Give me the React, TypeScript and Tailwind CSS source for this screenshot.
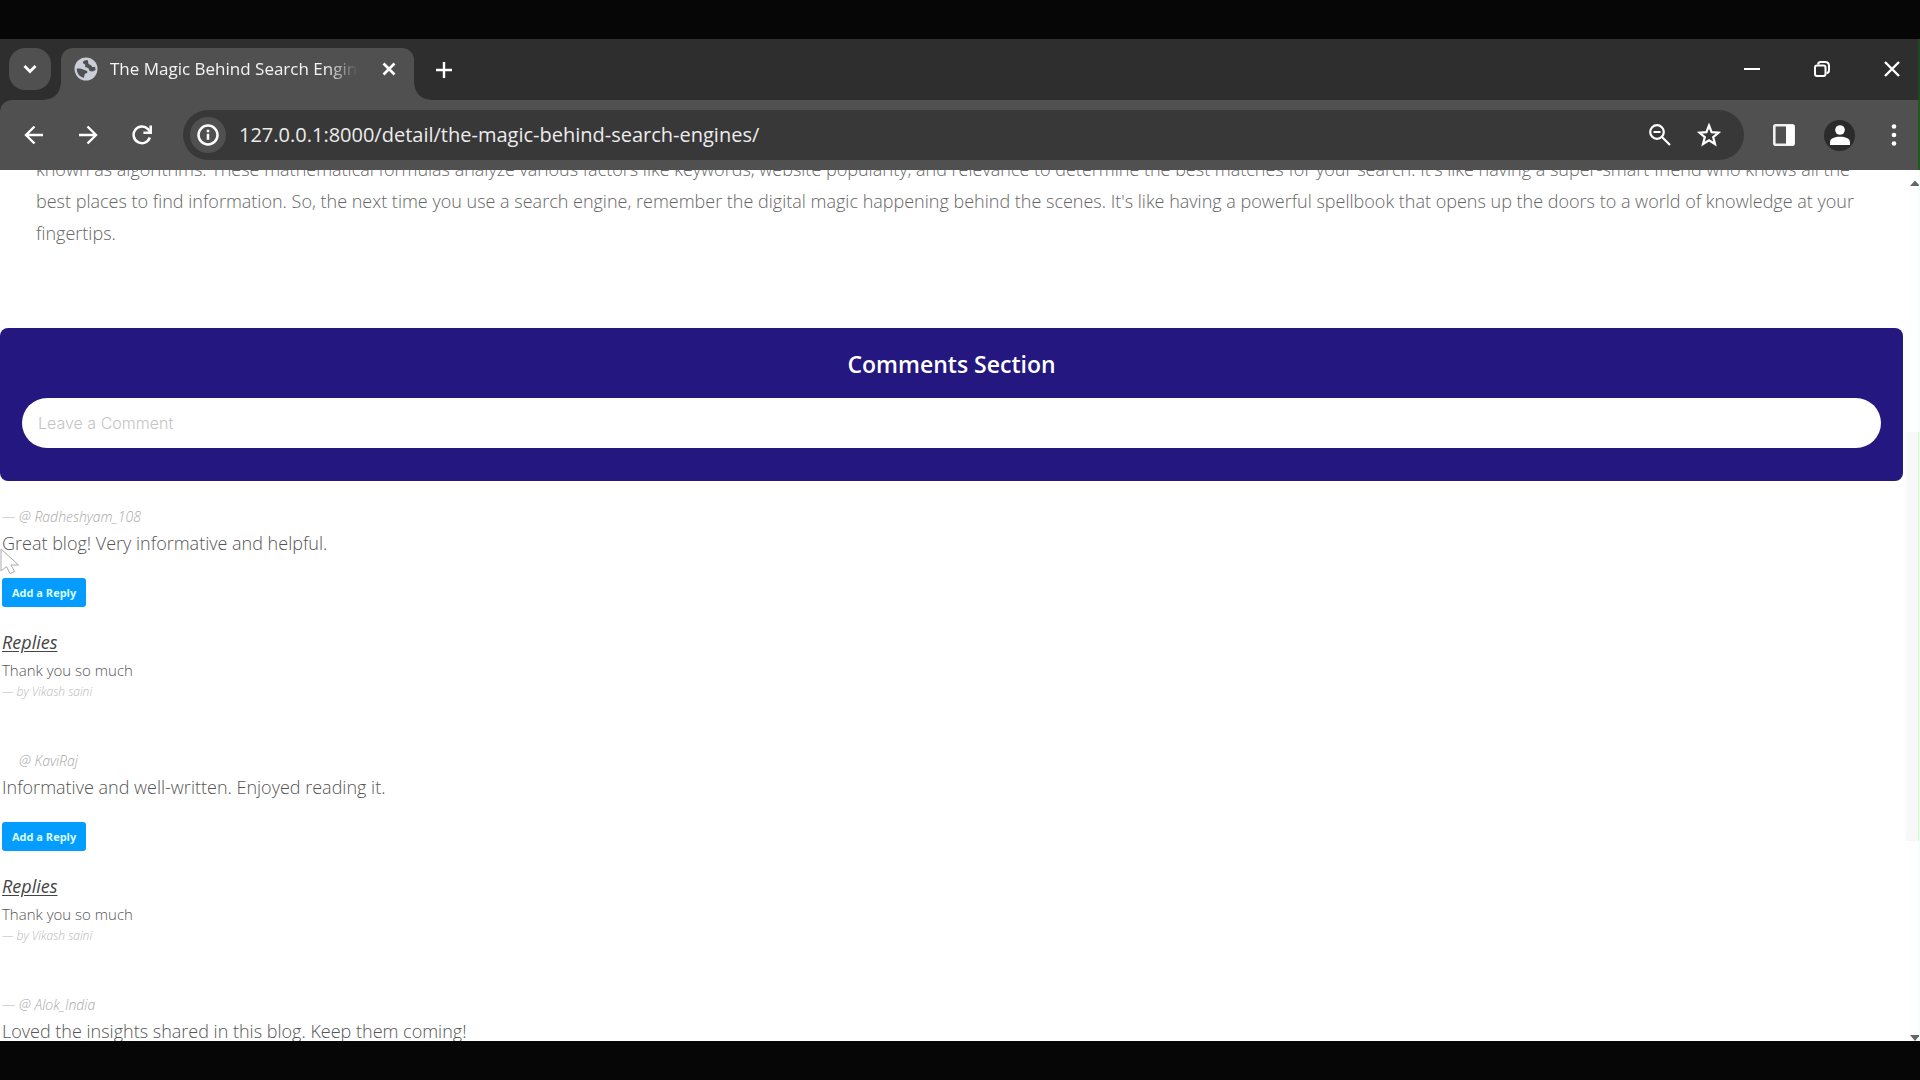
import React from "react";

type Comment = {
  id: string;
  author: string;
  text: string;
  dash: string;
  replies: { text: string; by: string }[];
};

const comments: Comment[] = [
  {
    id: "c1",
    author: "@ Radheshyam_108",
    text: "Great blog! Very informative and helpful.",
    dash: "text-[#b4b4b4]",
    replies: [{ text: "Thank you so much", by: "by Vikash saini" }],
  },
  {
    id: "c2",
    author: "@ KaviRaj",
    text: "Informative and well-written. Enjoyed reading it.",
    dash: "text-transparent",
    replies: [{ text: "Thank you so much", by: "by Vikash saini" }],
  },
  {
    id: "c3",
    author: "@ Alok_India",
    text: "Loved the insights shared in this blog. Keep them coming!",
    dash: "text-[#b4b4b4]",
    replies: [],
  },
];

function IconButton({
  label,
  className,
  children,
}: {
  label: string;
  className: string;
  children: React.ReactNode;
}) {
  return (
    <button
      type="button"
      aria-label={label}
      className={`flex shrink-0 items-center justify-center ${className}`}
    >
      {children}
    </button>
  );
}

function TabStrip() {
  return (
    <header className="flex h-[61px] shrink-0 items-end border-r-2 border-[#1f4a1f] bg-[#2e2e2e] pl-[9px]">
      <IconButton label="Search tabs" className="mb-[10px] size-[42px] rounded-2xl bg-[#505050]">
        <svg width="14" height="10" viewBox="0 0 14 10" fill="none" stroke="#fff" strokeWidth="2.8">
          <path d="M1.5 2 7 7.5 12.500 2" />
        </svg>
      </IconButton>

      <div className="relative ml-[10px] flex h-[52px] w-[353px] items-center rounded-t-xl bg-[#505050] pr-[17px] pb-[10px] pl-[13px]">
        <span className="absolute bottom-0 -left-4 size-4 bg-[radial-gradient(circle_at_0_0,transparent_15px,#505050_16px)]" />
        <span className="absolute -right-4 bottom-0 size-4 bg-[radial-gradient(circle_at_100%_0,transparent_15px,#505050_16px)]" />
        <svg width="24" height="24" viewBox="0 0 24 24" className="shrink-0">
          <circle cx="12" cy="12" r="11.500" fill="#c9ced8" />
          <path
            d="M13.500 3c-3 .2-4.800 1.200-4.600 2.700.2 1.300 1.900.9 2.300 2 .3 1-.6 1.800.3 2.600 1 .8 2.300.2 3.100 1.100.7.9.3 2.200 1.500 2.700 1.600.7 3.800.2 5.400-1 .1-1.200-.1-2.300-.5-3.300-1.400.5-2.800.3-3.400-.9-.5-1.100-2.100-.8-2.900-1.900-.9-1.200-.2-2.700-1.200-4z"
            fill="#505050"
          />
          <path
            d="M2.700 11.800c1.800-.5 4.500-.4 6.500.6 1.700.9 4.300 1 4.300 2.600 0 1.500-2.400 1.200-2.900 2.500-.4 1.200-.2 2.300-.9 3.400-4.200-1-7-4.900-7-9.100z"
            fill="#505050"
          />
        </svg>
        <span className="ml-3 flex-1 overflow-hidden text-[17px] leading-7 whitespace-nowrap text-[#f4f4f4] [mask-image:linear-gradient(to_right,#000_85%,transparent_98%)]">
          The Magic Behind Search Engines
        </span>
        <IconButton label="Close tab" className="ml-[18px] size-4">
          <svg width="14" height="14" viewBox="0 0 14 14" stroke="#fff" strokeWidth="2.6">
            <path d="M1.500 1.500l11 11M12.500 1.500l-11 11" />
          </svg>
        </IconButton>
      </div>

      <IconButton label="New tab" className="mb-5 ml-5 size-5">
        <svg width="16" height="16" viewBox="0 0 16 16" stroke="#fff" strokeWidth="2.4">
          <path d="M8 0v16M0 8h16" />
        </svg>
      </IconButton>

      <div className="mb-5 ml-auto flex gap-[48px] pr-[15px]">
        <IconButton label="Minimize" className="size-[22px]">
          <svg width="16" height="16" viewBox="0 0 16 16" stroke="#fff" strokeWidth="2">
            <path d="M0 8h16" />
          </svg>
        </IconButton>
        <IconButton label="Restore" className="size-[22px]">
          <svg width="16" height="16" viewBox="0 0 16 16" fill="none" stroke="#fff" strokeWidth="2">
            <rect x="1" y="4.500" width="10.500" height="10.500" rx="2" />
            <path d="M4 3.500C4.300 1.800 5 1 6.500 1H11c2.600 0 4 1.500 4 4v4c0 1.800-.8 3-2.500 3.200" />
          </svg>
        </IconButton>
        <IconButton label="Close" className="size-[22px]">
          <svg width="16" height="16" viewBox="0 0 16 16" stroke="#fff" strokeWidth="2.4">
            <path d="M1 1l14 14M15 1L1 15" />
          </svg>
        </IconButton>
      </div>
    </header>
  );
}

function Toolbar() {
  return (
    <div className="shrink-0 bg-[#2e2e2e]">
      <nav className="flex h-[70px] items-center rounded-tl-xl border-r-2 border-[#1f5a1f] bg-[#505050] pl-[22px]">
        <div className="flex gap-[30px]">
          <IconButton label="Back" className="size-6">
            <svg width="20" height="20" viewBox="0 0 20 20" fill="none" stroke="#fff" strokeWidth="2.4">
              <path d="M19 10H2M10.500 1.500 2 10l8.500 8.500" />
            </svg>
          </IconButton>
          <IconButton label="Forward" className="size-6">
            <svg width="20" height="20" viewBox="0 0 20 20" fill="none" stroke="#fff" strokeWidth="2.4">
              <path d="M1 10h17M9.500 1.500 18 10l-8.500 8.500" />
            </svg>
          </IconButton>
          <IconButton label="Reload" className="size-6">
            <svg width="20" height="20" viewBox="0 0 20 20" fill="none" stroke="#fff" strokeWidth="2.500">
              <path d="M17.800 12.500A8.300 8.300 0 1 1 16 4.200L18.500 7" />
              <path d="M18.700.5v7.300h-7.300" />
            </svg>
          </IconButton>
        </div>

        <div className="ml-[29px] flex h-[50px] flex-1 items-center rounded-full bg-[#383838] pr-[23px] pl-[7px]">
          <IconButton label="Site information" className="size-9 rounded-full bg-[#505050]">
            <svg width="22" height="22" viewBox="0 0 22 22" fill="none" stroke="#fff">
              <circle cx="11" cy="11" r="9.500" strokeWidth="2.500" />
              <path d="M11 9.700v6M11 5.800v2.400" strokeWidth="2.500" />
            </svg>
          </IconButton>
          <input
            aria-label="Address"
            readOnly
            value="127.0.0.1:8000/detail/the-magic-behind-search-engines/"
            className="ml-[13px] min-w-0 flex-1 bg-transparent text-[20px] leading-7 text-[#ececec] outline-none"
          />
          <div className="flex gap-[25px]">
            <IconButton label="Zoom" className="size-6">
              <svg width="22" height="22" viewBox="0 0 22 22" fill="none" stroke="#fff" strokeWidth="2.200">
                <circle cx="8" cy="8" r="6.800" />
                <path d="M13 13l8 8M4.500 8h7" />
              </svg>
            </IconButton>
            <IconButton label="Bookmark" className="size-6">
              <svg width="24" height="24" viewBox="0 0 24 24" fill="none" stroke="#fff" strokeWidth="2.200">
                <path d="M12 2.500l2.600 6.600 7 .5-5.400 4.500 1.800 6.900-6-3.800L6 21l1.800-6.900L2.400 9.600l7-.5z" />
              </svg>
            </IconButton>
          </div>
        </div>

        <div className="ml-[28px] flex items-center gap-[28px] pr-[13px]">
          <IconButton label="Side panel" className="size-6">
            <svg width="22" height="22" viewBox="0 0 22 22" fill="none">
              <rect x="1.300" y="1.300" width="19.400" height="19.400" rx="1.500" stroke="#f0f0f0" strokeWidth="2.600" />
              <path d="M13 1h8v20h-8z" fill="#fff" />
            </svg>
          </IconButton>
          <IconButton label="Profile" className="size-[31px] rounded-full bg-[#2b2b2b]">
            <svg width="20" height="20" viewBox="0 0 20 20" fill="#fff">
              <circle cx="10" cy="5" r="4.800" />
              <path d="M0 20v-3c0-3.600 5-5.200 10-5.200s10 1.600 10 5.200v3z" />
            </svg>
          </IconButton>
          <IconButton label="Menu" className="size-[22px]">
            <svg width="6" height="22" viewBox="0 0 6 22" fill="#fff">
              <circle cx="3" cy="2.500" r="2.300" />
              <circle cx="3" cy="11" r="2.300" />
              <circle cx="3" cy="19.500" r="2.300" />
            </svg>
          </IconButton>
        </div>
      </nav>
    </div>
  );
}

function CommentItem({ comment }: { comment: Comment }) {
  return (
    <article className="mb-[49px] pl-[2px]">
      <p className="text-[14px] leading-6 font-light text-[#a8a8a8] italic">
        <span className={comment.dash}>—</span> {comment.author}
      </p>
      <p className="text-[18px] leading-7 font-light text-[#555]">{comment.text}</p>
      {comment.replies.length > 0 && (
        <>
          <button
            type="button"
            className="mt-[21px] block h-[29px] rounded-[3px] bg-[#049dff] px-[10px] text-[11px] leading-4 font-bold text-[#d9ffff]"
          >
            Add a Reply
          </button>
          <h3 className="mt-[21px] text-[18px] leading-7 text-[#444] italic underline underline-offset-2">
            Replies
          </h3>
        </>
      )}
      {comment.replies.map((reply) => (
        <div key={reply.text}>
          <p className="text-[15px] leading-7 font-light text-[#555]">{reply.text}</p>
          <p className="text-[12px] leading-4 font-light text-[#b8b8b8] italic">— {reply.by}</p>
        </div>
      ))}
    </article>
  );
}

function Scrollbar() {
  return (
    <div className="grid w-[17px] shrink-0 grid-rows-[262fr_409fr_200fr] border-r border-[#effff0] pl-[3px]">
      <svg width="13" height="16" viewBox="0 0 13 16">
        <path d="M4 16l5-5.500 5 5.500z" fill="#666" />
      </svg>
      <div className="border-r border-[#c8ffc8] bg-[#f8f8f8]" />
      <svg width="13" height="6" viewBox="0 0 13 6" className="self-end">
        <path d="M4 0h10L9 6z" fill="#666" />
      </svg>
    </div>
  );
}

export default function App() {
  return (
    <div className="flex h-screen flex-col overflow-hidden bg-[#060606] pt-[39px] pb-[39px] font-['Open_Sans','Noto_Sans',sans-serif]">
      <TabStrip />
      <Toolbar />
      <div className="relative flex min-h-0 flex-1 bg-white">
        <main className="min-w-0 flex-1 overflow-hidden">
          <p className="-mt-[17px] px-9 text-[18px] leading-8 font-light text-[#666]">
            known as algorithms. These mathematical formulas analyze various factors like keywords,
            website popularity, and relevance to determine the best matches for your search. It's
            like having a super-smart friend who knows all the
            <br />
            best places to find information. So, the next time you use a search engine, remember the
            digital magic happening behind the scenes. It's like having a powerful spellbook that
            opens up the doors to a world of knowledge at your
            <br />
            fingertips.
          </p>

          <section className="mt-[79px] rounded-lg bg-[#24177f] px-[22px] pt-[18px] pb-[33px]">
            <h2 className="text-center text-[23px] leading-9 font-semibold text-white">
              Comments Section
            </h2>
            <input
              type="text"
              aria-label="Leave a Comment"
              placeholder="Leave a Comment"
              className="mt-4 block h-[50px] w-full rounded-full bg-white px-4 font-['Inter',sans-serif] text-[16px] font-light text-[#555] outline-none placeholder:text-[#c4c4c4]"
            />
          </section>

          <div className="pt-6">
            {comments.map((comment) => (
              <CommentItem key={comment.id} comment={comment} />
            ))}
          </div>
        </main>
        <Scrollbar />
        <svg
          width="20"
          height="27"
          viewBox="0 0 20 27"
          className="pointer-events-none absolute top-[378px] left-0"
        >
          <path
            d="M1 1v22l5.500-4.500 3.500 7 4.500-2-3.500-6.500h7.500z"
            fill="#fff"
            stroke="#aaa"
            strokeWidth="1"
          />
        </svg>
      </div>
    </div>
  );
}
